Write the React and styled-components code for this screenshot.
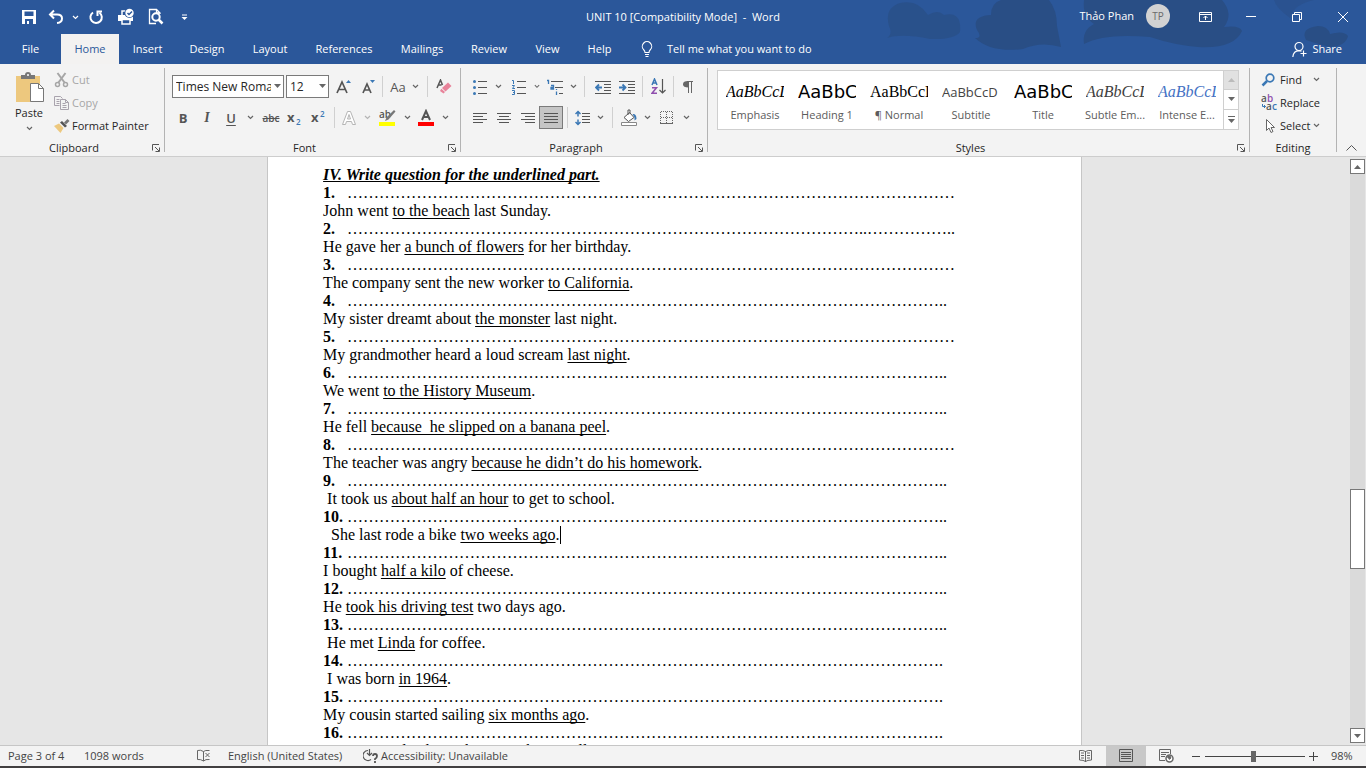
import React from "react";
import styled, { createGlobalStyle } from "styled-components";

const Global = createGlobalStyle`
  *, *::before, *::after { box-sizing: border-box; }
  body { margin: 0; background: #e6e6e6; }
  button, select, input { font: inherit; color: inherit; margin: 0; }
`;

const UI = `"Segoe UI", "Open Sans", "Noto Sans", sans-serif`;

const Shell = styled.div`
  height: 100vh;
  display: flex;
  flex-direction: column;
  overflow: hidden;
  font: 11px/16px ${UI};
  color: #262626;
`;

/* ---------- header ---------- */
const Header = styled.header`
  position: relative;
  background: #2b579a;
  color: #fff;
`;
const Backdrop = styled.svg`
  position: absolute;
  top: 0;
  right: 0;
`;
const TitleRow = styled.div`
  position: relative;
  display: grid;
  grid-template-columns: 1fr auto 1fr;
  align-items: center;
  height: 34px;
`;
const QuickAccess = styled.div`
  display: flex;
  padding-left: 16px;
`;
const DocTitle = styled.h1`
  margin: 0;
  font: inherit;
  white-space: pre;
`;
const WindowTools = styled.div`
  display: flex;
  align-items: center;
  justify-content: flex-end;
`;
const Avatar = styled.span`
  display: grid;
  place-items: center;
  width: 24px;
  height: 24px;
  margin: 0 12px 2px;
  border-radius: 50%;
  background: #d2d2d2;
  color: #6b6b6b;
  font-size: 10px;
`;
const UserName = styled.span`
  padding-bottom: 2px;
`;
const Plain = styled.button`
  display: inline-flex;
  align-items: center;
  justify-content: center;
  flex: none;
  width: ${(p) => (p.$w ? p.$w + "px" : "auto")};
  height: ${(p) => p.$h || 23}px;
  padding: 0;
  border: 1px solid ${(p) => (p.$on ? "#7a7a7a" : "transparent")};
  background: ${(p) => (p.$on ? "#c5c5c5" : "transparent")};
  white-space: nowrap;
`;
const TabRow = styled.nav`
  position: relative;
  display: flex;
  height: 30px;
`;
const Tab = styled.button`
  width: ${(p) => p.$w}px;
  padding: 0;
  border: 0;
  background: ${(p) => (p.$on ? "#f3f2f1" : "transparent")};
  color: ${(p) => (p.$on ? "#2b579a" : "#fff")};
`;
const TellMe = styled.button`
  display: flex;
  align-items: center;
  gap: 14px;
  padding: 0 17px;
  border: 0;
  background: transparent;
  color: #fff;
`;
const Share = styled(TellMe)`
  gap: 4px;
  margin-left: auto;
  padding: 0 24px;
`;

/* ---------- ribbon ---------- */
const Ribbon = styled.div`
  display: flex;
  flex: none;
  height: 93px;
  padding-top: 4px;
  background: #f3f3f3;
  border-bottom: 1px solid #cdcdcd;
`;
const Group = styled.section`
  display: flex;
  flex-direction: column;
  flex: ${(p) => (p.$w ? "none" : "1")};
  width: ${(p) => (p.$w ? p.$w + "px" : "auto")};
  min-width: 0;
  height: 84px;
  border-right: 1px solid #b3b3b3;
`;
const GroupBody = styled.div`
  flex: 1;
  display: flex;
  flex-direction: ${(p) => (p.$row ? "row" : "column")};
  gap: ${(p) => p.$gap || 0}px;
  padding: ${(p) => p.$pad || "0"};
  min-height: 0;
`;
const GroupFoot = styled.div`
  display: grid;
  grid-template-columns: ${(p) => (p.$launch ? "1fr 16px" : "1fr")};
  height: 16px;
  margin-bottom: -4px;
  text-align: center;
`;
const Row = styled.div`
  display: flex;
  align-items: center;
`;
const Divider = styled.span`
  flex: none;
  width: ${(p) => p.$w}px;
  height: 21px;
  background: linear-gradient(#d0d0d0, #d0d0d0) center / 1px 100% no-repeat;
`;
const ComboBox = styled.label`
  position: relative;
  width: ${(p) => p.$w}px;
  height: 23px;
  margin-right: 2px;
  select {
    appearance: none;
    width: 100%;
    height: 100%;
    padding: 0 12px 0 3px;
    border: 1px solid #7a7a7a;
    border-radius: 0;
    background: #fff;
    font-size: 12px;
  }
  svg {
    position: absolute;
    right: 3px;
    top: 9px;
    pointer-events: none;
  }
`;
const Paste = styled.button`
  display: flex;
  flex-direction: column;
  align-items: center;
  width: 46px;
  padding: 3px 0 0;
  border: 0;
  background: transparent;
`;
const PasteLabel = styled.span`
  padding: 2px 0 5px;
`;
const Stack = styled.div`
  display: flex;
  flex-direction: column;
`;
const Command = styled.button`
  display: flex;
  align-items: center;
  gap: ${(p) => p.$gap || 2}px;
  height: 23px;
  padding: 0;
  border: 0;
  background: transparent;
  color: ${(p) => (p.$off ? "#a6a6a6" : "#262626")};
  svg:last-child { margin-left: ${(p) => p.$far || 0}px; }
`;
const CommandText = styled.span`
  white-space: nowrap;
`;
const Letter = styled.span`
  color: #555;
  font: ${(p) => p.$font || `600 13px ${UI}`};
  text-decoration: ${(p) => p.$line || "none"};
  text-underline-offset: 2px;
`;
const Gallery = styled.div`
  display: flex;
  height: 60px;
  border: 1px solid #cfcfcf;
  background: #fff;
`;
const StyleItems = styled.div`
  flex: 1;
  display: flex;
  padding-left: 1px;
  overflow: hidden;
`;
const StyleCard = styled.button`
  display: flex;
  flex-direction: column;
  align-items: center;
  flex: none;
  width: 72px;
  padding: 10px 7px 0;
  border: 0;
  background: transparent;
  color: #5c5c5c;
  white-space: nowrap;
`;
const Preview = styled.span`
  width: 58px;
  height: 22px;
  margin-bottom: 4px;
  overflow: hidden;
  text-align: left;
  color: ${(p) => p.$color || "#000"};
  font: ${(p) => p.$font};
  line-height: 22px;
`;
const GalleryNav = styled.div`
  display: grid;
  grid-template-rows: repeat(3, 1fr);
  width: 15px;
  border-left: 1px solid #cfcfcf;
  button {
    display: grid;
    place-items: center;
    padding: 0;
    border: 0;
    border-bottom: 1px solid #cfcfcf;
    background: #fff;
  }
  button:first-child { background: #e1e1e1; }
  button:last-child { border-bottom: 0; }
`;
const Collapse = styled.div`
  display: flex;
  align-items: flex-end;
  justify-content: center;
  width: 29px;
`;

/* ---------- document ---------- */
const Workspace = styled.main`
  flex: 1;
  display: flex;
  min-height: 0;
  background: #e6e6e6;
`;
const Canvas = styled.div`
  flex: 1;
  overflow: hidden;
`;
const Page = styled.article`
  width: 60.4%;
  min-height: 100%;
  margin: 0 auto;
  padding: 9px 55px 0;
  border: solid #c6c6c6;
  border-width: 0 1px;
  background: #fff;
  color: #000;
  font: 16px/18px "Times New Roman", "Liberation Serif", serif;
  white-space: pre;
`;
const Heading = styled.h2`
  margin: 0;
  font: inherit;
  font-weight: 700;
  font-style: italic;
  text-decoration: underline;
  text-decoration-skip-ink: none;
`;
const Line = styled.p`
  margin: 0;
  height: 18px;
  u { text-underline-offset: 2px; text-decoration-skip-ink: none; }
`;
const Num = styled.b`
  display: inline-block;
  width: 24px;
`;
const Caret = styled.span`
  display: inline-block;
  width: 1px;
  height: 18px;
  background: #000;
  vertical-align: top;
`;
const ScrollBar = styled.div`
  display: flex;
  flex-direction: column;
  width: 17px;
  padding: 2px 1px;
  background: #e6e6e6;
`;
const ScrollButton = styled.button`
  display: grid;
  place-items: center;
  height: 15px;
  padding: 0;
  border: 1px solid #777;
  background: #fff;
`;
const Track = styled.div`
  flex: ${(p) => p.$grow};
  background: #dadada;
`;
const Thumb = styled.div`
  height: 80px;
  border: 1px solid #777;
  background: #fff;
`;

/* ---------- status bar ---------- */
const Status = styled.footer`
  display: flex;
  align-items: center;
  height: 23px;
  padding: 0 5px 0 8px;
  border-top: 1px solid #c6c6c6;
  border-bottom: 2px solid #413f40;
  background: #f3f3f3;
  color: #444;
`;
const StatusItem = styled.button`
  display: flex;
  align-items: center;
  gap: 3px;
  width: ${(p) => p.$w}px;
  padding: 0;
  border: 0;
  background: transparent;
  white-space: nowrap;
`;
const Spacer = styled.span`
  flex: 1;
`;
const ViewButton = styled.button`
  display: grid;
  place-items: center;
  width: 40px;
  height: 20px;
  padding: 0;
  border: 0;
  background: ${(p) => (p.$on ? "#c8c8c8" : "transparent")};
`;
const Zoom = styled.input`
  appearance: none;
  width: 100px;
  height: 12px;
  background: linear-gradient(#444, #444) center / 100% 1px no-repeat;
  &::-webkit-slider-thumb {
    appearance: none;
    width: 5px;
    height: 11px;
    background: #666;
  }
`;
const Percent = styled.span`
  width: 40px;
  padding-left: 10px;
`;

/* ---------- icons ---------- */
const Svg = ({ w = 16, h = 16, children, ...rest }) => (
  <svg width={w} height={h} viewBox={`0 0 ${w} ${h}`} fill="none" stroke="currentColor" aria-hidden="true" {...rest}>
    {children}
  </svg>
);
const Chevron = ({ color = "#666" }) => (
  <Svg w={7} h={5} stroke={color}><path d="M1 1l2.5 2.5L6 1" strokeWidth="1.2" /></Svg>
);
const Triangle = ({ up, color = "#666" }) => (
  <Svg w={7} h={4} stroke="none" fill={color}><path d={up ? "M0 4l3.5-4L7 4z" : "M0 0h7L3.500 4z"} /></Svg>
);
const Launcher = ({ name }) => (
  <Plain $w={16} $h={16} aria-label={`${name} settings`}>
    <Svg w={8} h={8} stroke="#555"><path d="M.5 6.500V.5H7M3 3l4 4M7.500 3.500v4h-4" /></Svg>
  </Plain>
);
const Lines = ({ rows }) => (
  <Svg stroke="#555">
    {rows.map(([a, b], i) => <path key={i} d={`M${a} ${3.5 + i * 3}H${b}`} />)}
  </Svg>
);
const SaveIcon = () => (
  <Svg stroke="none" fill="currentColor">
    <path fillRule="evenodd" d="M1 1h14v14H1zM3.500 2.500v4.500h9V2.500zM4 10v5h2v-3h2v3h4v-5z" />
  </Svg>
);
const UndoIcon = () => (
  <Svg strokeWidth="2"><path d="M6 1.500L2 5.500l4 4M2.500 5.500H9q5 0 5 4t-5 4.500" /></Svg>
);
const RedoIcon = () => (
  <Svg strokeWidth="2"><path d="M5 3.500a5.700 5.700 0 1 0 6.500.2M14 2.500H9.500V7" /></Svg>
);
const PrintIcon = () => (
  <Svg w={18} h={18} strokeWidth="1.5">
    <path d="M5 7V3h4" />
    <path d="M1 7h15v6h-3v-2H5v2H1z" fill="currentColor" stroke="none" />
    <path d="M5 11.500h8V16H5z" />
    <circle cx="12.500" cy="5" r="5" fill="#2b579a" stroke="none" />
    <circle cx="12.500" cy="5" r="4.200" fill="#fff" stroke="none" />
    <path d="M10.500 5l1.500 1.500 3-3" stroke="#2b579a" />
  </Svg>
);
const PreviewIcon = () => (
  <Svg w={17} h={18} strokeWidth="1.3">
    <path d="M13 6V5L9.500 1.500H2.500v14H9M9.500 1.500V5H13" />
    <circle cx="9" cy="9" r="3.700" strokeWidth="2" /><path d="M11.500 11.500l4 4" strokeWidth="2.500" />
  </Svg>
);
const CustomizeIcon = () => (
  <Svg w={7} h={7}><path d="M1 1h5" /><path d="M.5 3h6l-3 3z" fill="currentColor" stroke="none" /></Svg>
);
const PasteIcon = () => (
  <Svg w={30} h={32}>
    <path d="M2 5h24v26H2z" fill="#edc87e" stroke="none" />
    <path d="M7 8V4h4q0-3 3-3t3 3h4v4z" fill="#777" stroke="none" />
    <circle cx="14" cy="4" r="1" fill="#fff" stroke="none" />
    <path d="M16.500 12.500h8l5 5v13h-13z" fill="#fff" stroke="#777" /><path d="M24.500 12.500v5h5" stroke="#777" />
  </Svg>
);
const CutIcon = () => (
  <Svg stroke="#a6a6a6" strokeWidth="1.500">
    <path d="M3.500 1l7 9.500M11.500 1l-7 9.500" strokeWidth="2" /><circle cx="3.500" cy="12.500" r="2" /><circle cx="11.500" cy="12.500" r="2" />
  </Svg>
);
const CopyIcon = () => (
  <Svg stroke="#a9a3ad">
    <path d="M5.500 10.500h-5v-9h6l2 2M2.500 4.500h3M2.500 6.500h3M2.500 8.500h3" />
    <path d="M6.500 4.500h5l3 3v7h-8zM11.500 4.500v3h3M8.500 8.500h3M8.500 10.500h4M8.500 12.500h4" />
  </Svg>
);
const PainterIcon = () => (
  <Svg stroke="none">
    <path d="M0 8l5-2.500 4.500 4.500-3 5z" fill="#edc87e" />
    <path d="M6 4.500l2-1.500 5 5-2 1.500z" fill="#555" /><path d="M10 4.500L13.500 1l2 2L12 6.500z" fill="#777" />
  </Svg>
);
const GrowFont = ({ down }) => (
  <Svg w={18} h={18} stroke="#555" strokeWidth="1.7">
    <path d={down ? "M4 15l4-9 4 9M5.500 12h5" : "M2 15L7 4l5 11M4 11.500h6"} />
    <path d={down ? "M11 2h5l-2.500 3z" : "M11 5h5l-2.500-3z"} fill="#3b78b5" stroke="none" />
  </Svg>
);
const EraserIcon = () => (
  <Svg stroke="#555" strokeWidth="1.500">
    <path d="M1 9l3.500-8 2 5M2.500 6h3" />
    <path d="M6 9l6-5.500 3.500 3.500-6 5.500z" fill="#e8839a" stroke="none" />
    <path d="M5.300 9.700L9 13l-1.500 1.500L4 12z" fill="#e8839a" stroke="none" />
  </Svg>
);
const OutlineA = () => (
  <Svg stroke="#b5b5b5"><path d="M1.500 14.500L6.500 1.500h3l5 13h-3l-1-3h-5l-1 3zM6.500 9h3L8 4.500z" fill="#fff" /></Svg>
);
const Highlighter = () => (
  <Svg w={17} h={17} stroke="none">
    <text x="0" y="9" fontFamily="Open Sans" fontSize="10" fontWeight="600" fill="#555">ab</text>
    <path d="M15 1l1.500 1.500-7 8L6 12l1.500-3.500z" fill="#777" /><path d="M0 13h16v4H0z" fill="#ff0" />
  </Svg>
);
const FontColor = () => (
  <Svg w={16} h={17} stroke="#555" strokeWidth="2">
    <path d="M4 11L8 2l4 9M5.500 8h5" /><path d="M0 13h16v4H0z" fill="#f00" stroke="none" />
  </Svg>
);
const Script = ({ y }) => (
  <Svg w={18} h={18} stroke="none" fontFamily="Open Sans">
    <text x="1" y="13" fontSize="13" fontWeight="700" fill="#555">x</text>
    <text x="10" y={y} fontSize="8" fontWeight="600" fill="#3b78b5">2</text>
  </Svg>
);
const BulletIcon = () => (
  <Svg stroke="#555">
    {[2.5, 8.5, 14.5].map((y) => <path key={y} d={`M6 ${y}h9`} />)}
    {[2.5, 8.5, 14.5].map((y) => <circle key={y} cx="2.500" cy={y} r="1.500" fill="#3b78b5" stroke="none" />)}
  </Svg>
);
const NumberIcon = () => (
  <Svg stroke="#555">
    {[2.5, 8.5, 14.5].map((y) => <path key={y} d={`M6 ${y}h9`} />)}
    <path d="M1 1.500h1.500V5M1 6.500h2.500L1.500 9.500H4M1 11.500h2.500v4H1M2 13.500h1.500" stroke="#3b78b5" />
  </Svg>
);
const MultiIcon = () => (
  <Svg w={18} stroke="#555">
    <path d="M5 2.500h12M9 8.500h8M13 14.500h4" /><path d="M1 1.500h1.500V5M5 6.500h2.500v3.500H5V8.500h2.500M10.500 10v1M10.500 12.500V16" stroke="#3b78b5" strokeWidth="1.300" />
  </Svg>
);
const IndentIcon = ({ right }) => (
  <Svg stroke="#555">
    <path d="M0 2.500h16M9 5.500h7M9 8.500h7M9 11.500h7M0 14.500h16" />
    <path d={right ? "M0 8.500h6M3.500 5.500l3 3-3 3" : "M1 8.500h6M4 5.500l-3 3 3 3"} stroke="#3b78b5" strokeWidth="1.800" />
  </Svg>
);
const SortIcon = () => (
  <Svg w={15} h={17} strokeWidth="1.500">
    <path d="M1 7l2.500-6L6 7M2 5h3" stroke="#3b78b5" /><path d="M1 9.700h4.500L1 15.200h5" stroke="#8f4fae" />
    <path d="M11.500 1v14M8.500 12l3 3 3-3" stroke="#555" strokeWidth="1.200" />
  </Svg>
);
const PilcrowIcon = () => (
  <Svg w={12} h={14} stroke="#666">
    <path d="M6.500 1v12M9.500 1v12M5 1.500h6" /><path d="M6.500 1v6.500Q1 7.500 1 4.200T6.500 1z" fill="#666" stroke="none" />
  </Svg>
);
const SpacingIcon = () => (
  <Svg stroke="#555">
    <path d="M7 3.500h8M7 6.500h8M7 9.500h8M7 12.500h8" />
    <path d="M3 1v5.500M.5 4L3 1.500 5.500 4M3 9.500V15M.5 12L3 14.500 5.500 12" stroke="#3b78b5" strokeWidth="1.500" />
  </Svg>
);
const ShadingIcon = () => (
  <Svg w={17} h={17} stroke="#555">
    <path d="M3 8.500l5.500-5 4.500 5-5.500 4zM7 6V1h2v4" fill="#fff" />
    <path d="M11.500 5q4-.5 4 5l-2 1.500V8.500z" fill="#3b78b5" stroke="none" />
    <path d="M.5 13.500h15v3H.5z" fill="#fff" stroke="#888" />
  </Svg>
);
const BorderIcon = () => (
  <Svg stroke="#666"><path d="M2 1.500h12M2 7.500h12M1.500 2v11M7.500 2v11M13.500 2v11" strokeDasharray="1 1" /><path d="M1 13.500h13" /></Svg>
);
const FindIcon = () => (
  <Svg h={14} stroke="#3b78b5"><circle cx="9" cy="5" r="3.800" strokeWidth="1.700" /><path d="M6 8l-4.500 4.500" strokeWidth="2.500" /></Svg>
);
const ReplaceIcon = () => (
  <Svg w={17} h={17} stroke="none" fontFamily="Open Sans" fontSize="10" fontWeight="600">
    <text x="0" y="8" fill="#555">a</text><text x="6" y="8" fill="#8f4fae">b</text>
    <text x="5" y="16" fill="#555">a</text><text x="11" y="16" fill="#3b78b5">c</text>
    <path d="M1.500 10v2.500h3M3 11l1.500 1.500L3 14" stroke="#3b78b5" fill="none" />
  </Svg>
);
const SelectIcon = () => (
  <Svg h={15} stroke="#666"><path d="M5.500 1.500v11L8 10l2 4.500 2-1-2-4h3.500z" fill="#fff" /></Svg>
);
const BulbIcon = () => (
  <Svg w={12} h={17} strokeWidth="1.100"><path d="M4 11.500Q4 10 2.500 8.500a4.700 4.700 0 1 1 7 0Q8 10 8 11.500zM4 13.500h4M4.500 15.500h3" /></Svg>
);
const ShareIcon = () => (
  <Svg w={16} h={17} strokeWidth="1.200"><circle cx="7" cy="5.500" r="4" /><path d="M.8 16Q1.500 10 7 9.700q1.500 0 2.500.6M11.500 9.500v6M8.500 12.500h6" /></Svg>
);
const ProofIcon = () => (
  <Svg stroke="#666"><path d="M7.500 3.500q-3-2-6-1v9q3-.5 6 1.500zM7.500 3.500Q9 2 13.500 2.500M7.500 13q2-2 6-1.500M9.500 5l4 4M13.500 5l-4 4" /></Svg>
);
const AccessIcon = () => (
  <Svg w={15} h={16} stroke="#555" strokeWidth="1.200"><path d="M5 2.500a5 5 0 1 0 3 9M6.500 1v6M4 5l2.500 2.500L9 5" /><path d="M10 8q0-2 2-2t2 2-2 3v1M12 13v2" strokeWidth="1.800" /></Svg>
);
const ReadIcon = () => (
  <Svg w={14} h={14} stroke="#666"><path d="M6.500 2.500Q4 1 .5 1.500v9.500q4 0 6 1.500 2-1.500 6-1.500V1.500Q9 1 6.500 2.500zM6.500 2v11M2 4h3M2 6.500h3M2 9h3M8 4h3M8 6.500h3M8 9h3" /></Svg>
);
const PrintLayoutIcon = () => (
  <Svg w={14} h={14} stroke="#555"><path d="M.5.5h13v12H.5zM2 3.500h10M2 5.500h10M2 7.500h10M2 9.500h10" /></Svg>
);
const WebIcon = () => (
  <Svg w={15} h={14} stroke="#666"><path d="M6 11.500H.5v-11h11V5M2 3.500h8M2 5.500h5M2 7.500h4" /><circle cx="10.500" cy="9.500" r="3.500" fill="#fff" strokeWidth="1.500" /><path d="M8 8l3-1 1 2-2 1.500" fill="#666" /></Svg>
);

/* ---------- data ---------- */
const TABS = [["File", 59], ["Home", 58], ["Insert", 57], ["Design", 62], ["Layout", 64], ["References", 84], ["Mailings", 72], ["Review", 62], ["View", 55], ["Help", 49]];
const SERIF = `"Liberation Serif", serif`;
const SANS = `"DejaVu Sans", sans-serif`;
const STYLES = [
  ["Emphasis", "AaBbCcDd", `italic 16px ${SERIF}`],
  ["Heading 1", "AaBbC", `18px ${SANS}`],
  ["¶ Normal", "AaBbCcDd", `16px ${SERIF}`],
  ["Subtitle", "AaBbCcD", `13px "Open Sans", sans-serif`, "#444"],
  ["Title", "AaBbC", `18px ${SANS}`],
  ["Subtle Em...", "AaBbCcDd", `italic 16px ${SERIF}`, "#404040"],
  ["Intense E...", "AaBbCcDd", `italic 16px ${SERIF}`, "#4472c4"],
];
const dots = (n, tail = "") => "…".repeat(n) + tail;
const LONG = dots(38);
const MID = dots(37, "..");
const SHORT = dots(37, ".");
const QUESTIONS = [
  [LONG, "John went ", "to the beach", " last Sunday."],
  [dots(32, "..") + dots(5, ".."), "He gave her ", "a bunch of flowers", " for her birthday."],
  [LONG, "The company sent the new worker ", "to California", "."],
  [MID, "My sister dreamt about ", "the monster", " last night."],
  [LONG, "My grandmother heard a loud scream ", "last night", "."],
  [MID, "We went ", "to the History Museum", "."],
  [MID, "He fell ", "because  he slipped on a banana peel", "."],
  [LONG, "The teacher was angry ", "because he didn’t do his homework", "."],
  [MID, " It took us ", "about half an hour", " to get to school."],
  [MID, "  She last rode a bike ", "two weeks ago", ".", true],
  [MID, "I bought ", "half a kilo", " of cheese."],
  [MID, "He ", "took his driving test", " two days ago."],
  [MID, " He met ", "Linda", " for coffee."],
  [SHORT, " I was born ", "in 1964", "."],
  [SHORT, "My cousin started sailing ", "six months ago", "."],
  [SHORT, "Susan stayed at home ", "because she was ill", "."],
];

const Foot = ({ name, launch = true }) => (
  <GroupFoot $launch={launch}><span>{name}</span>{launch && <Launcher name={name} />}</GroupFoot>
);
const Menu = ({ w, name, color }) => <Plain $w={w} aria-label={`${name} options`}><Chevron color={color} /></Plain>;

export default function App() {
  return (
    <Shell>
      <Global />
      <Header>
        <Backdrop width="490" height="64" viewBox="0 0 490 64" fill="#294e85" aria-hidden="true">
          <path d="M11 38q6-4 2-12Q8 8 24 3q18-4 28 12 10-6 16 0 18-4 16 17-6 8-30 7-28-6-43-1z" opacity=".7" />
          <path d="M99 38q8 0 2-8-6-14 14-15 0-12 10-15h48q8 10 8 26l4 21q-20-6-38 2-32 4-48-11z" />
          <path d="M208 44q-2-14 10-20-12-8-10-24h138q12 14 2 27 16-2 18 4-8 18-44 16-24-2-48-10-46-4-66 7z" />
          <path d="M430 40q-6-12 12-14 10 0 12 8 14-4 18 2-2 10-18 11-16-4-24-7z" />
          <path d="M398 0h40q-20 4-24 18Q400 8 398 0z" opacity=".5" />
        </Backdrop>
        <TitleRow>
          <QuickAccess>
            <Plain $w={26} aria-label="Save"><SaveIcon /></Plain>
            <Plain $w={28} aria-label="Undo"><UndoIcon /></Plain>
            <Menu w={10} name="Undo" color="#fff" />
            <Plain $w={32} aria-label="Repeat"><RedoIcon /></Plain>
            <Plain $w={28} aria-label="Quick print"><PrintIcon /></Plain>
            <Plain $w={30} aria-label="Print preview"><PreviewIcon /></Plain>
            <Plain $w={28} aria-label="Customize toolbar"><CustomizeIcon /></Plain>
          </QuickAccess>
          <DocTitle>UNIT 10 [Compatibility Mode]  -  Word</DocTitle>
          <WindowTools>
            <UserName>Thảo Phan</UserName>
            <Avatar>TP</Avatar>
            <Plain $w={46} aria-label="Ribbon display options">
              <Svg w={13} h={10}><path d="M.5.5h12v9H.5zM.5 2.500h12M6.500 8V4M4.500 6l2-2 2 2" /></Svg>
            </Plain>
            <Plain $w={46} aria-label="Minimize"><Svg w={10} h={10}><path d="M0 4.500h10" /></Svg></Plain>
            <Plain $w={46} aria-label="Restore"><Svg w={10} h={10}><path d="M.5 2.500h7v7h-7zM2.500 2V.5h7v7H8" /></Svg></Plain>
            <Plain $w={46} aria-label="Close"><Svg w={10} h={10}><path d="M0 0l10 10M10 0L0 10" /></Svg></Plain>
          </WindowTools>
        </TitleRow>
        <TabRow>
          {TABS.map(([t, w]) => <Tab key={t} $w={t === "File" ? 61 : w} $on={t === "Home"}>{t}</Tab>)}
          <TellMe><BulbIcon />Tell me what you want to do</TellMe>
          <Share><ShareIcon />Share</Share>
        </TabRow>
      </Header>

      <Ribbon>
        <Group $w={165}>
          <GroupBody $row $gap={2} $pad="0 0 0 6px">
            <Paste><PasteIcon /><PasteLabel>Paste</PasteLabel><Chevron /></Paste>
            <Stack>
              <Command $off><CutIcon /><CommandText>Cut</CommandText></Command>
              <Command $off><CopyIcon /><CommandText>Copy</CommandText></Command>
              <Command><PainterIcon /><CommandText>Format Painter</CommandText></Command>
            </Stack>
          </GroupBody>
          <Foot name="Clipboard" />
        </Group>

        <Group $w={296}>
          <GroupBody $gap={8} $pad="7px 0 0 7px">
            <Row>
              <ComboBox $w={112}><select aria-label="Font"><option>Times New Roman</option></select><Triangle /></ComboBox>
              <ComboBox $w={43}><select aria-label="Font size"><option>12</option></select><Triangle /></ComboBox>
              <Plain $w={26} aria-label="Increase font size"><GrowFont /></Plain>
              <Plain $w={22} aria-label="Decrease font size"><GrowFont down /></Plain>
              <Divider $w={7} />
              <Plain $w={24} aria-label="Change case"><Letter $font={`13px ${UI}`}>Aa</Letter></Plain>
              <Menu w={10} name="Change case" />
              <Divider $w={14} />
              <Plain $w={20} aria-label="Clear formatting"><EraserIcon /></Plain>
            </Row>
            <Row>
              <Plain $w={22} aria-label="Bold"><Letter $font={`700 13px ${UI}`}>B</Letter></Plain>
              <Plain $w={26} aria-label="Italic"><Letter $font={`italic 700 14px ${SERIF}`}>I</Letter></Plain>
              <Plain $w={22} aria-label="Underline"><Letter $line="underline">U</Letter></Plain>
              <Menu w={16} name="Underline" />
              <Plain $w={26} aria-label="Strikethrough"><Letter $font={`600 10px ${UI}`} $line="line-through">abc</Letter></Plain>
              <Plain $w={22} aria-label="Subscript"><Script y={16} /></Plain>
              <Plain $w={26} aria-label="Superscript"><Script y={8} /></Plain>
              <Divider $w={5} />
              <Plain $w={24} aria-label="Text effects"><OutlineA /></Plain>
              <Menu w={12} name="Text effects" color="#b5b5b5" />
              <Plain $w={28} aria-label="Highlight color"><Highlighter /></Plain>
              <Menu w={12} name="Highlight" />
              <Plain $w={26} aria-label="Font color"><FontColor /></Plain>
              <Menu w={12} name="Font color" />
            </Row>
          </GroupBody>
          <Foot name="Font" />
        </Group>

        <Group $w={247}>
          <GroupBody $gap={8} $pad="7px 0 0 8px">
            <Row>
              <Plain $w={22} aria-label="Bullets"><BulletIcon /></Plain>
              <Menu w={14} name="Bullets" />
              <Plain $w={28} aria-label="Numbering"><NumberIcon /></Plain>
              <Menu w={8} name="Numbering" />
              <Plain $w={28} aria-label="Multilevel list"><MultiIcon /></Plain>
              <Menu w={9} name="Multilevel list" />
              <Divider $w={13} />
              <Plain $w={24} aria-label="Decrease indent"><IndentIcon /></Plain>
              <Plain $w={24} aria-label="Increase indent"><IndentIcon right /></Plain>
              <Divider $w={6} />
              <Plain $w={26} aria-label="Sort"><SortIcon /></Plain>
              <Divider $w={4} />
              <Plain $w={26} aria-label="Show marks"><PilcrowIcon /></Plain>
            </Row>
            <Row>
              <Plain $w={22} aria-label="Align left"><Lines rows={[[1, 15], [1, 11], [1, 15], [1, 11]]} /></Plain>
              <Plain $w={26} aria-label="Center"><Lines rows={[[1, 15], [3, 13], [1, 15], [3, 13]]} /></Plain>
              <Plain $w={22} aria-label="Align right"><Lines rows={[[1, 15], [5, 15], [1, 15], [5, 15]]} /></Plain>
              <Plain $w={24} $on aria-label="Justify"><Lines rows={[[1, 15], [1, 15], [1, 15], [1, 15]]} /></Plain>
              <Divider $w={8} />
              <Plain $w={24} aria-label="Line spacing"><SpacingIcon /></Plain>
              <Menu w={10} name="Line spacing" />
              <Divider $w={14} />
              <Plain $w={20} aria-label="Shading"><ShadingIcon /></Plain>
              <Menu w={16} name="Shading" />
              <Plain $w={24} aria-label="Borders"><BorderIcon /></Plain>
              <Menu w={14} name="Borders" />
            </Row>
          </GroupBody>
          <Foot name="Paragraph" />
        </Group>

        <Group>
          <GroupBody $pad="2px 10px 0 9px">
            <Gallery>
              <StyleItems>
                {STYLES.map(([name, sample, font, color]) => (
                  <StyleCard key={name}><Preview $font={font} $color={color}>{sample}</Preview>{name}</StyleCard>
                ))}
              </StyleItems>
              <GalleryNav>
                <button aria-label="Previous styles"><Triangle up color="#bbb" /></button>
                <button aria-label="Next styles"><Triangle /></button>
                <button aria-label="All styles"><Svg w={7} h={7} stroke="#666"><path d="M0 .5h7" /><path d="M0 3h7L3.500 7z" fill="#666" stroke="none" /></Svg></button>
              </GalleryNav>
            </Gallery>
          </GroupBody>
          <Foot name="Styles" />
        </Group>

        <Group $w={87}>
          <GroupBody $pad="0 0 0 11px">
            <Command $gap={3} $far={8}><FindIcon /><CommandText>Find</CommandText><Chevron /></Command>
            <Command><ReplaceIcon /><CommandText>Replace</CommandText></Command>
            <Command $gap={3}><SelectIcon /><CommandText>Select</CommandText><Chevron /></Command>
          </GroupBody>
          <Foot name="Editing" launch={false} />
        </Group>
        <Collapse>
          <Plain $w={20} $h={16} aria-label="Collapse the ribbon"><Svg w={11} h={6} stroke="#555"><path d="M.5 5.500l5-5 5 5" /></Svg></Plain>
        </Collapse>
      </Ribbon>

      <Workspace>
        <Canvas>
          <Page>
            <Heading>IV. Write question for the underlined part.</Heading>
            {QUESTIONS.map(([fill, before, marked, after, caret], i) => (
              <React.Fragment key={i}>
                <Line><Num>{i + 1}.</Num>{fill}</Line>
                <Line>{before}<u>{marked}</u>{after}{caret && <Caret />}</Line>
              </React.Fragment>
            ))}
          </Page>
        </Canvas>
        <ScrollBar>
          <ScrollButton aria-label="Scroll up"><Triangle up /></ScrollButton>
          <Track $grow={316} />
          <Thumb />
          <Track $grow={159} />
          <ScrollButton aria-label="Scroll down"><Triangle /></ScrollButton>
        </ScrollBar>
      </Workspace>

      <Status>
        <StatusItem $w={76}>Page 3 of 4</StatusItem>
        <StatusItem $w={112}>1098 words</StatusItem>
        <StatusItem $w={32} aria-label="Proofing errors"><ProofIcon /></StatusItem>
        <StatusItem $w={135}>English (United States)</StatusItem>
        <StatusItem $w={160}><AccessIcon />Accessibility: Unavailable</StatusItem>
        <Spacer />
        <ViewButton aria-label="Read mode"><ReadIcon /></ViewButton>
        <ViewButton $on aria-label="Print layout"><PrintLayoutIcon /></ViewButton>
        <ViewButton aria-label="Web layout"><WebIcon /></ViewButton>
        <Plain $w={19} $h={20} aria-label="Zoom out"><Svg w={8} h={8} stroke="#444"><path d="M0 4.500h8" /></Svg></Plain>
        <Zoom type="range" aria-label="Zoom" min="10" max="190" defaultValue="98" />
        <Plain $w={16} $h={20} aria-label="Zoom in"><Svg w={9} h={9} stroke="#444"><path d="M0 4.500h9M4.500 0v9" /></Svg></Plain>
        <Percent>98%</Percent>
      </Status>
    </Shell>
  );
}
